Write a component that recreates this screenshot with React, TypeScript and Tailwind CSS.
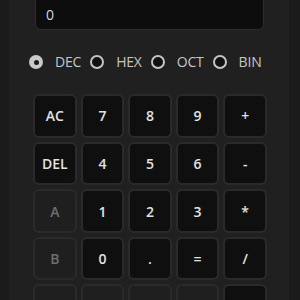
import { useState } from 'react';

type Base = 'DEC' | 'HEX' | 'OCT' | 'BIN';

const keys: { label: string; disabled?: boolean }[] = [
  { label: 'AC' }, { label: '7' }, { label: '8' }, { label: '9' }, { label: '+' },
  { label: 'DEL' }, { label: '4' }, { label: '5' }, { label: '6' }, { label: '-' },
  { label: 'A', disabled: true }, { label: '1' }, { label: '2' }, { label: '3' }, { label: '*' },
  { label: 'B', disabled: true }, { label: '0' }, { label: '.' }, { label: '=' }, { label: '/' },
  { label: 'C', disabled: true }, { label: 'D', disabled: true }, { label: 'E', disabled: true }, { label: 'F', disabled: true }, { label: '%' },
];

function Radio({ checked }: { checked: boolean }) {
  return (
    <span
      className={
        checked
          ? 'w-[14px] h-[14px] rounded-full bg-[#c9c9c9] flex items-center justify-center'
          : 'w-[14px] h-[14px] rounded-full border-2 border-[#c4c4c4] bg-[#111111]'
      }
    >
      {checked && <span className="w-[5px] h-[5px] rounded-full bg-[#1a1a1a]" />}
    </span>
  );
}

export default function App() {
  const [base, setBase] = useState<Base>('DEC');
  const [value] = useState('0');

  return (
    <div
      className="w-[300px] h-[300px] overflow-hidden flex bg-[#1b1b1b]"
      style={{ fontFamily: '"Open Sans", "Liberation Sans", sans-serif' }}
    >
      <div className="w-[9px] shrink-0" />
      <div className="w-[280px] shrink-0 bg-[#202020] flex flex-col">
        <div className="ml-[26px] w-[229px] h-[39px] -mt-[9px] shrink-0 rounded-[6px] border border-[#2d2d2d] bg-[#0d0d0d] flex items-end pb-[4px] px-[10px]">
          <span className="text-[14px] leading-[20px] text-[#d2d8e0]">{value}</span>
        </div>

        <div className="mt-[25px] ml-[20px] flex items-center h-[14px]">
          {(['DEC', 'HEX', 'OCT', 'BIN'] as Base[]).map((b, i) => (
            <button
              key={b}
              onClick={() => setBase(b)}
              className={`flex items-center gap-[12px] ${i > 0 ? 'ml-[9px]' : ''}`}
            >
              <Radio checked={base === b} />
              <span className="text-[14px] leading-[14px] text-[#c6c6c6] tracking-[-0.2px]">{b}</span>
            </button>
          ))}
        </div>

        <div className="mt-[25px] ml-[24px] w-[234px] grid grid-cols-5 gap-[4px]">
          {keys.map((k) => (
            <button
              key={k.label}
              disabled={k.disabled}
              className={`aspect-square rounded-[6px] border-2 border-[#2a2a2a] flex items-center justify-center text-[14px] font-semibold ${
                k.disabled ? 'bg-[#1f1f1f] text-[#6e6e6e]' : 'bg-[#0f0f0f] text-[#e2e2e2]'
              }`}
            >
              {k.label}
            </button>
          ))}
        </div>
      </div>
      <div className="flex-1" />
    </div>
  );
}
